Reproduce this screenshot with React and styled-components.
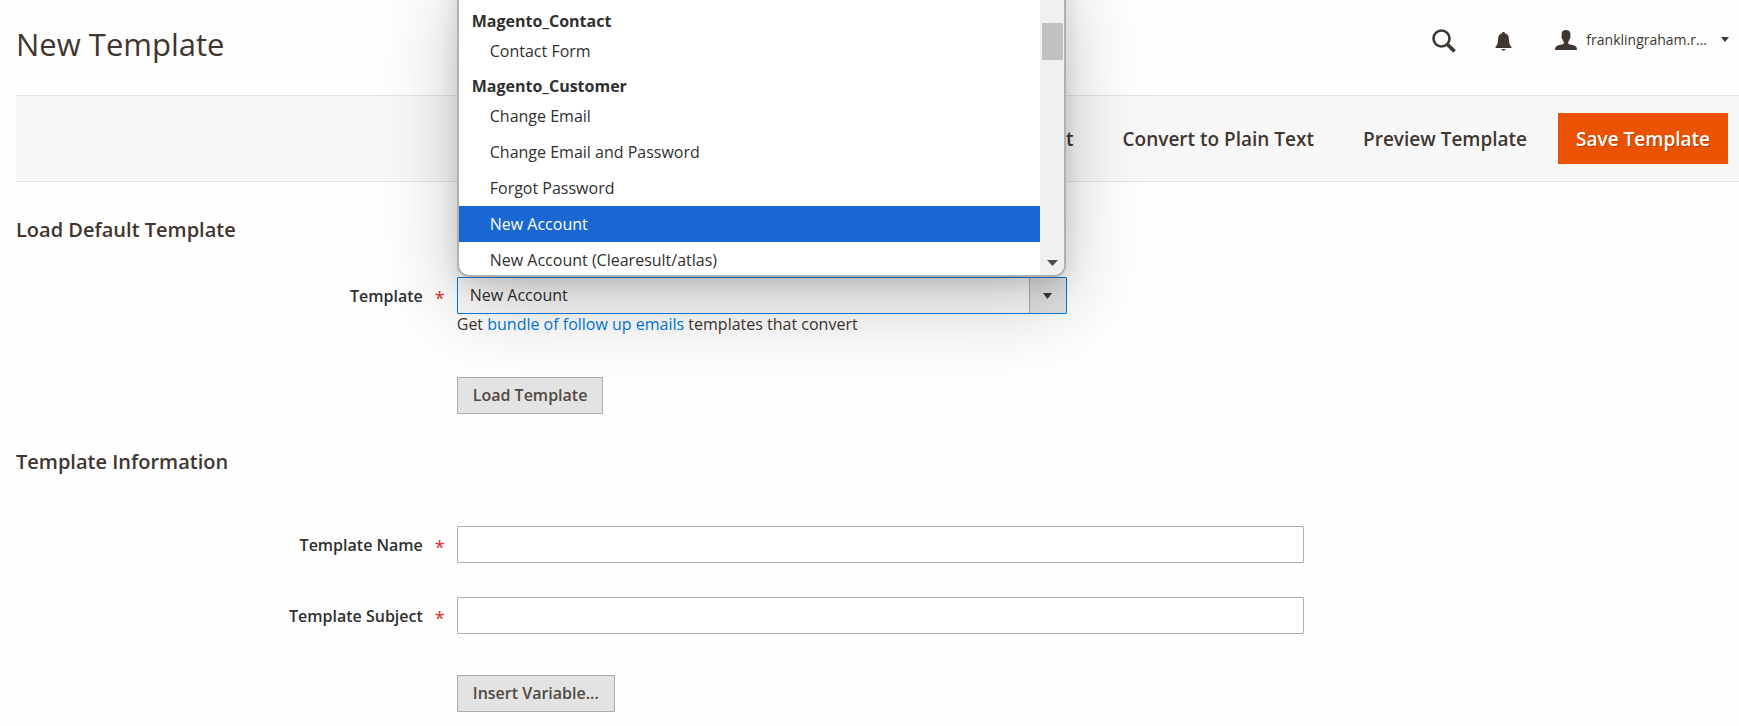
import React from "react";
import styled, { createGlobalStyle } from "styled-components";

const GlobalStyle = createGlobalStyle`
  *, *::before, *::after { box-sizing: border-box; }
  body {
    margin: 0;
    background: #fefefe;
    color: #41362f;
    font-family: "Open Sans", "Noto Sans", sans-serif;
    font-size: 16px;
    line-height: 24px;
    overflow-x: hidden;
  }
  button, input, select { font: inherit; color: inherit; }
`;

const Page = styled.div`
  padding-left: 16px;
`;

const Header = styled.header`
  display: flex;
  align-items: center;
  justify-content: space-between;
  height: 95px;
  padding: 0 10px 8px 0;
`;

const Title = styled.h1`
  margin: 0;
  font-size: 31px;
  line-height: 44px;
  font-weight: 400;
`;

const HeaderTools = styled.div`
  display: flex;
  align-items: center;
  padding-bottom: 6px;
`;

const IconButton = styled.button`
  display: flex;
  padding: 0;
  border: 0;
  background: none;
  margin-right: ${(p) => p.$gap}px;
`;

const AccountButton = styled.button`
  display: flex;
  align-items: center;
  padding: 0 0 2px;
  border: 0;
  background: none;
  font-size: 14px;

  span { margin: 0 14px 0 9px; }
`;

const Toolbar = styled.div`
  display: flex;
  align-items: center;
  justify-content: flex-end;
  gap: 13px;
  height: 87px;
  padding-right: 11px;
  border-top: 1px solid #e3e3e3;
  border-bottom: 1px solid #e3e3e3;
  background: #f8f8f8;
`;

const ActionButton = styled.button`
  height: 51px;
  padding: 0 18px;
  border: 0;
  background: ${(p) => (p.$primary ? "#eb5202" : "transparent")};
  color: ${(p) => (p.$primary ? "#fff" : "#41362f")};
  text-shadow: ${(p) => (p.$primary ? "1px 1px 0 rgba(0, 0, 0, 0.25)" : "none")};
  font-size: 19px;
  font-weight: 600;
`;

const Section = styled.section`
  padding-top: ${(p) => p.$top}px;
`;

const SectionTitle = styled.h2`
  margin: 0 0 ${(p) => p.$gap}px;
  font-size: 20px;
  line-height: 28px;
  font-weight: 600;
`;

const Field = styled.div`
  display: grid;
  grid-template-columns: 25% 50%;
  align-items: start;
  margin: 0 11px ${(p) => p.$gap}px 17px;
`;

const Label = styled.label`
  display: flex;
  justify-content: flex-end;
  gap: 12px;
  padding: 7px 12px 0 0;
  color: #303030;
  font-weight: 600;

  &::after {
    content: "*";
    color: #e22626;
    font-size: 18px;
    line-height: 28px;
    height: 24px;
    font-weight: 400;
  }
`;

const Control = styled.div`
  grid-column: 2;
`;

const TextInput = styled.input`
  display: block;
  width: 100%;
  height: 37px;
  padding: 0 10px;
  border: 1px solid #adadad;
  border-radius: 1px;
  background: #fff;
  color: #303030;
`;

const SelectBox = styled.div`
  position: relative;
  width: 72%;
`;

const Select = styled.select`
  display: block;
  appearance: none;
  width: 100%;
  height: 37px;
  padding: 0 48px 2px 12px;
  border: 1px solid #007bdb;
  border-radius: 1px;
  background: #fcfcfc;
  color: #303030;
  outline: 0;
`;

const SelectArrow = styled.span`
  position: absolute;
  top: 1px;
  right: 1px;
  bottom: 1px;
  width: 37px;
  display: flex;
  align-items: center;
  justify-content: center;
  border-left: 1px solid #adadad;
  background: #e3e3e3;
  pointer-events: none;
`;

const Popup = styled.div`
  position: absolute;
  z-index: 2;
  left: 0;
  right: 1px;
  bottom: 100%;
  display: flex;
  height: 312px;
  border: 2px solid #b0b0b0;
  border-radius: 12px;
  background: #fff;
  color: #303030;
  overflow: hidden;
  box-shadow: 0 26px 80px rgba(0, 0, 0, 0.22), 0 6px 20px rgba(0, 0, 0, 0.12);
`;

const OptionList = styled.div`
  flex: 1;
  display: flex;
  flex-direction: column;
  justify-content: flex-end;
  margin-bottom: -3px;
`;

const GroupLabel = styled.div`
  flex: none;
  height: 29px;
  padding: 5px 13px 0;
  font-weight: 700;
`;

const Option = styled.div`
  flex: none;
  height: 36px;
  padding: 6px 31px;
  background: ${(p) => (p.$active ? "#1967d2" : "transparent")};
  color: ${(p) => (p.$active ? "#fff" : "inherit")};
`;

const ScrollTrack = styled.div`
  display: flex;
  flex-direction: column;
  justify-content: space-between;
  align-items: center;
  width: 24px;
  padding: 56px 1px 9px 2px;
  background: #f0f0f0;
`;

const ScrollThumb = styled.div`
  width: 21px;
  height: 37px;
  background: #c1c1c1;
`;

const Note = styled.p`
  margin: 0;
  line-height: 20px;

  a { color: #007bdb; text-decoration: none; }
`;

const SmallButton = styled.button`
  display: block;
  height: 37px;
  padding: 0 15px 2px;
  border: 1px solid #adadad;
  border-radius: 0;
  background: #e3e3e3;
  color: #514943;
  font-weight: 600;
`;

const groups = [
  { name: "Magento_Contact", options: ["Contact Form"] },
  {
    name: "Magento_Customer",
    options: [
      "Change Email",
      "Change Email and Password",
      "Forgot Password",
      "New Account",
      "New Account (Clearesult/atlas)",
    ],
  },
];

function SearchIcon() {
  return (
    <svg width="24" height="24" viewBox="0 0 24 24" fill="none" stroke="#41362f">
      <circle cx="9.5" cy="9.5" r="8" strokeWidth="2.6" />
      <path d="M15.2 15.2 22.6 22.4" strokeWidth="3.6" />
    </svg>
  );
}

function BellIcon() {
  return (
    <svg width="17" height="22" viewBox="0 -2 17 22" fill="#41362f">
      <path d="M8.5 0c.9 0 1.3.5 1.4 1.2 2.6.7 4 2.700 4 5.500 0 4 .8 6.400 2.600 8.300v1H.5v-1c1.800-1.900 2.600-4.300 2.600-8.300 0-2.800 1.400-4.800 4-5.500C7.200.5 7.600 0 8.500 0z" />
      <path d="M6.500 17h4c-.2 1-1 1.700-2 1.700s-1.800-.7-2-1.700z" />
    </svg>
  );
}

function UserIcon() {
  return (
    <svg width="22" height="20" viewBox="0 0 22 20" fill="#41362f">
      <path d="M11 0c2.800 0 4.400 1.400 4.400 3.800 0 .9-.1 1.500-.2 2.100.5.200.5 1.200.1 2.200-.2.500-.4.700-.6.700-.3 1.500-.9 2.500-1.500 3.200v1.600c.2.500 1.300.8 3.200 1.200 3.400.8 5.600 1.300 5.600 5.200H0c0-3.900 2.200-4.400 5.600-5.200 1.900-.4 3-.7 3.200-1.200V12c-.6-.7-1.200-1.700-1.500-3.200-.2 0-.4-.2-.6-.7-.4-1-.4-2 .1-2.200-.1-.6-.2-1.200-.2-2.100C6.600 1.400 8.200 0 11 0z" />
    </svg>
  );
}

function Caret({ width, height, color = "#41362f" }) {
  return (
    <svg width={width} height={height} viewBox="0 0 10 6" preserveAspectRatio="none" fill={color}>
      <path d="M0 0h10L5 6z" />
    </svg>
  );
}

function TemplatePicker() {
  return (
    <SelectBox>
      <Select id="template" defaultValue="New Account">
        {groups.map((g) => (
          <optgroup key={g.name} label={g.name}>
            {g.options.map((o) => (
              <option key={o}>{o}</option>
            ))}
          </optgroup>
        ))}
      </Select>
      <SelectArrow>
        <Caret width={9} height={6} />
      </SelectArrow>
      <Popup>
        <OptionList role="listbox" aria-label="Template">
          {groups.map((g) => (
            <React.Fragment key={g.name}>
              <GroupLabel>{g.name}</GroupLabel>
              {g.options.map((o) => (
                <Option key={o} role="option" aria-selected={o === "New Account"} $active={o === "New Account"}>
                  {o}
                </Option>
              ))}
            </React.Fragment>
          ))}
        </OptionList>
        <ScrollTrack>
          <ScrollThumb />
          <Caret width={11} height={6} color="#505050" />
        </ScrollTrack>
      </Popup>
    </SelectBox>
  );
}

export default function App() {
  return (
    <>
      <GlobalStyle />
      <Page>
        <Header>
          <Title>New Template</Title>
          <HeaderTools>
            <IconButton aria-label="Search" $gap={39}><SearchIcon /></IconButton>
            <IconButton aria-label="Notifications" $gap={43}><BellIcon /></IconButton>
            <AccountButton>
              <UserIcon />
              <span>franklingraham.r...</span>
              <Caret width={8} height={5} />
            </AccountButton>
          </HeaderTools>
        </Header>
        <Toolbar>
          <ActionButton>Back</ActionButton>
          <ActionButton>Reset</ActionButton>
          <ActionButton>Convert to Plain Text</ActionButton>
          <ActionButton>Preview Template</ActionButton>
          <ActionButton $primary>Save Template</ActionButton>
        </Toolbar>
        <main>
          <Section $top={34}>
            <SectionTitle $gap={33}>Load Default Template</SectionTitle>
            <Field $gap={43}>
              <Label htmlFor="template">Template</Label>
              <Control>
                <TemplatePicker />
                <Note>
                  Get <a href="#bundle">bundle of follow up emails</a> templates that convert
                </Note>
              </Control>
            </Field>
            <Field $gap={0}>
              <Control>
                <SmallButton>Load Template</SmallButton>
              </Control>
            </Field>
          </Section>
          <Section $top={34}>
            <SectionTitle $gap={50}>Template Information</SectionTitle>
            <Field $gap={34}>
              <Label htmlFor="name">Template Name</Label>
              <Control><TextInput id="name" type="text" /></Control>
            </Field>
            <Field $gap={41}>
              <Label htmlFor="subject">Template Subject</Label>
              <Control><TextInput id="subject" type="text" /></Control>
            </Field>
            <Field $gap={0}>
              <Control>
                <SmallButton>Insert Variable...</SmallButton>
              </Control>
            </Field>
          </Section>
        </main>
      </Page>
    </>
  );
}
